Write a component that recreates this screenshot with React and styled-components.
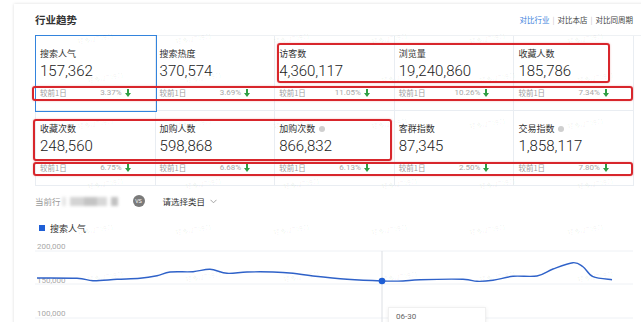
import React from "react";
import styled, { createGlobalStyle } from "styled-components";

const GlobalStyle = createGlobalStyle`
  html, body {
    margin: 0;
    background: #fff;
    overflow: hidden;
  }
  body {
    padding: 4px 0 0 14px;
    font-family: "Noto Sans CJK SC", "Liberation Sans", sans-serif;
    color: #333;
  }
`;

const Card = styled.div`
  position: relative;
  width: 640px;
  min-height: 330px;
  padding-left: 21px;
  box-sizing: border-box;
  background: #fff;
  box-shadow: 0 0 3px rgba(0, 0, 0, 0.14);
`;

const Header = styled.div`
  height: 32px;
  box-sizing: border-box;
  padding-right: 21px;
  border-bottom: 1px solid #eef1f4;
  display: flex;
  align-items: center;
  justify-content: space-between;
`;

const Title = styled.h2`
  margin: 0;
  font-size: 10.5px;
  font-weight: 600;
  color: #333;
`;

const Links = styled.div`
  display: flex;
  align-items: center;
  font-size: 7.5px;
`;

const LinkItem = styled.span`
  color: ${(p) => (p.$active ? "#3b7fdc" : "#444")};
`;

const Sep = styled.span`
  color: #c8c8c8;
  margin: 0 3px;
`;

const Grid = styled.div`
  width: 598px;
  display: grid;
  grid-template-columns: repeat(5, 1fr);
  border-left: 1px solid #e9edf2;
`;

const Cell = styled.div`
  height: 75px;
  box-sizing: border-box;
  padding: 12px 24px 0 4px;
  border-right: 1px solid #e9edf2;
  border-bottom: 1px solid #e9edf2;
  box-shadow: ${(p) => (p.$selected ? "0 0 0 1px #3384dd" : "none")};
  position: relative;
  z-index: ${(p) => (p.$selected ? 1 : 0)};
  display: flex;
  flex-direction: column;
`;

const Label = styled.div`
  font-size: 9px;
  line-height: 12px;
  color: #333;
  display: flex;
  align-items: center;
  white-space: nowrap;
`;

const Info = styled.span`
  width: 6px;
  height: 6px;
  border-radius: 50%;
  background: #cfcfcf;
  margin-left: 4px;
`;

const Value = styled.div`
  margin-top: 2px;
  font-family: Roboto, "Liberation Sans", sans-serif;
  font-weight: 300;
  font-size: 15px;
  line-height: 18px;
  color: #222;
  white-space: nowrap;
`;

const Compare = styled.div`
  margin-top: 6px;
  line-height: 14px;
  font-size: 7.5px;
  color: #a0a0a0;
  display: flex;
  align-items: center;
  justify-content: space-between;
  white-space: nowrap;
`;

const Rate = styled.span`
  font-family: Roboto, "Liberation Sans", sans-serif;
  font-size: 8px;
  color: #a8a8a8;
  display: flex;
  align-items: center;
  gap: 3px;
`;

const FilterRow = styled.div`
  margin-top: 7px;
  height: 16px;
  display: flex;
  align-items: center;
  font-size: 8.5px;
  color: #999;
`;

const Blurred = styled.span`
  width: 56px;
  height: 9px;
  margin-left: 1px;
  background: linear-gradient(
    90deg,
    #e6e6e6 0 8%,
    #fff 8% 14%,
    #d4d4d4 14% 40%,
    #c4c4c4 40% 62%,
    #d8d8d8 62% 80%,
    #fff 80% 88%,
    #c2c2c2 88% 100%
  );
  filter: blur(1.5px);
`;

const Vs = styled.span`
  width: 12px;
  height: 12px;
  border-radius: 50%;
  background: #7a7a7a;
  color: #fff;
  font-size: 5px;
  font-family: "Liberation Sans", sans-serif;
  display: flex;
  align-items: center;
  justify-content: center;
  margin-left: 15px;
`;

const Select = styled.span`
  margin-left: 18px;
  color: #333;
  display: flex;
  align-items: center;
  gap: 5px;
`;

const Legend = styled.div`
  margin-top: 11px;
  height: 16px;
  display: flex;
  align-items: center;
  gap: 5px;
  padding-left: 4px;
  font-size: 9px;
  color: #333;
`;

const Swatch = styled.span`
  width: 6px;
  height: 6px;
  background: #1f5fd6;
`;

const ChartWrap = styled.div`
  position: relative;
  margin-top: 2px;
  width: 598px;
  height: 90px;
`;

const Tooltip = styled.div`
  position: absolute;
  left: 353px;
  top: 69px;
  width: 98px;
  height: 30px;
  box-sizing: border-box;
  padding: 4px 7px;
  background: #fff;
  border: 1px solid #f0f0f0;
  box-shadow: 0 1px 4px rgba(0, 0, 0, 0.08);
  font-family: Roboto, "Liberation Sans", sans-serif;
  font-size: 8px;
  color: #666;
`;

const Annotation = styled.div`
  position: absolute;
  left: ${(p) => p.$x}px;
  top: ${(p) => p.$y}px;
  width: ${(p) => p.$w}px;
  height: ${(p) => p.$h}px;
  box-sizing: border-box;
  border: 2px solid #d8262c;
  border-radius: 3px;
  box-shadow: 0 0 2px rgba(216, 38, 44, 0.35);
  pointer-events: none;
  z-index: 3;
`;

const Watermark = styled.span`
  position: absolute;
  left: ${(p) => p.$x}px;
  top: ${(p) => p.$y}px;
  font-size: 6.5px;
  color: rgba(0, 0, 0, 0.06);
  transform: rotate(-9deg);
  white-space: nowrap;
  pointer-events: none;
  z-index: 2;
`;

const DownArrow = () => (
  <svg width="6" height="8" viewBox="0 0 6 8">
    <path d="M2 0h2v4h2L3 8 0 4h2z" fill="#2f9e44" />
  </svg>
);

const Chevron = () => (
  <svg width="7" height="5" viewBox="0 0 7 5">
    <polyline points="0.5,0.8 3.5,3.8 6.5,0.8" fill="none" stroke="#999" strokeWidth="0.9" />
  </svg>
);

const metrics = [
  { label: "搜索人气", value: "157,362", rate: "3.37%", selected: true },
  { label: "搜索热度", value: "370,574", rate: "3.69%" },
  { label: "访客数", value: "4,360,117", rate: "11.05%" },
  { label: "浏览量", value: "19,240,860", rate: "10.26%" },
  { label: "收藏人数", value: "185,786", rate: "7.34%" },
  { label: "收藏次数", value: "248,560", rate: "6.75%" },
  { label: "加购人数", value: "598,868", rate: "6.68%" },
  { label: "加购次数", value: "866,832", rate: "6.13%", info: true },
  { label: "客群指数", value: "87,345", rate: "2.50%" },
  { label: "交易指数", value: "1,858,117", rate: "7.80%", info: true },
];

const points = [
  [2, 40], [42, 40.3], [58, 42.7], [82, 41.3], [105, 40.3], [122, 37.7],
  [135, 34], [158, 33.7], [175, 31.3], [192, 35.3], [212, 34], [238, 34],
  [258, 35.3], [278, 38], [312, 41.3], [347, 43], [368, 43], [385, 41.7],
  [428, 41.3], [442, 43.3], [458, 42.3], [478, 38.3], [502, 38], [518, 31],
  [538, 24.7], [548, 28.7], [558, 38.7], [577, 41.7],
];

const smoothPath = (pts) => {
  let d = `M${pts[0][0]},${pts[0][1]}`;
  for (let i = 0; i < pts.length - 1; i++) {
    const p0 = pts[i - 1] || pts[i];
    const p1 = pts[i];
    const p2 = pts[i + 1];
    const p3 = pts[i + 2] || p2;
    const c1 = [p1[0] + (p2[0] - p0[0]) / 6, p1[1] + (p2[1] - p0[1]) / 6];
    const c2 = [p2[0] - (p3[0] - p1[0]) / 6, p2[1] - (p3[1] - p1[1]) / 6];
    d += ` C${c1[0]},${c1[1]} ${c2[0]},${c2[1]} ${p2[0]},${p2[1]}`;
  }
  return d;
};

// watermark grid, relative to the card
const marks = [];
[29, 68, 114, 174, 220, 267].forEach((y, r) => {
  [63, 161, 259, 357, 455, 553].forEach((x) => {
    marks.push({ x: x + (r % 2 ? 10 : 0), y });
  });
});

const Chart = () => (
  <ChartWrap>
    <svg width="598" height="90" viewBox="0 0 598 90">
      {[13, 46, 80].map((y) => (
        <line key={y} x1="0" x2="598" y1={y} y2={y} stroke="#eef1f5" strokeWidth="1" />
      ))}
      {[
        ["200,000", 11],
        ["150,000", 45],
        ["100,000", 78],
      ].map(([t, y]) => (
        <text
          key={t}
          x="2"
          y={y}
          fontSize="8"
          fill="#a9a9a9"
          fontFamily="Roboto, 'Liberation Sans', sans-serif"
        >
          {t}
        </text>
      ))}
      <line x1="347" x2="347" y1="13" y2="90" stroke="#dcdfe4" strokeWidth="1" />
      <path d={smoothPath(points)} fill="none" stroke="#2f62c9" strokeWidth="1.4" />
      <circle cx="347" cy="43" r="3.3" fill="#1f5fd6" />
    </svg>
    <Tooltip>06-30</Tooltip>
  </ChartWrap>
);

const App = () => {
  return (
    <>
      <GlobalStyle />
      <Card>
        <Header>
          <Title>行业趋势</Title>
          <Links>
            <LinkItem $active>对比行业</LinkItem>
            <Sep>|</Sep>
            <LinkItem>对比本店</LinkItem>
            <Sep>|</Sep>
            <LinkItem>对比同周期</LinkItem>
          </Links>
        </Header>
        <Grid>
          {metrics.map((m) => (
            <Cell key={m.label} $selected={m.selected}>
              <Label>
                {m.label}
                {m.info && <Info />}
              </Label>
              <Value>{m.value}</Value>
              <Compare>
                <span>较前1日</span>
                <Rate>
                  {m.rate}
                  <DownArrow />
                </Rate>
              </Compare>
            </Cell>
          ))}
        </Grid>
        <FilterRow>
          当前行
          <Blurred />
          <Vs>VS</Vs>
          <Select>
            请选择类目
            <Chevron />
          </Select>
        </FilterRow>
        <Legend>
          <Swatch />
          搜索人气
        </Legend>
        <Chart />

        <Annotation $x={263} $y={39} $w={333} $h={40} />
        <Annotation $x={18} $y={82} $w={601} $h={15} />
        <Annotation $x={19} $y={115} $w={359} $h={42} />
        <Annotation $x={19} $y={158} $w={600} $h={14} />

        {marks.map((m, i) => (
          <Watermark key={i} $x={m.x} $y={m.y}>
            轻零(270971)
          </Watermark>
        ))}
      </Card>
    </>
  );
};

export default App;
